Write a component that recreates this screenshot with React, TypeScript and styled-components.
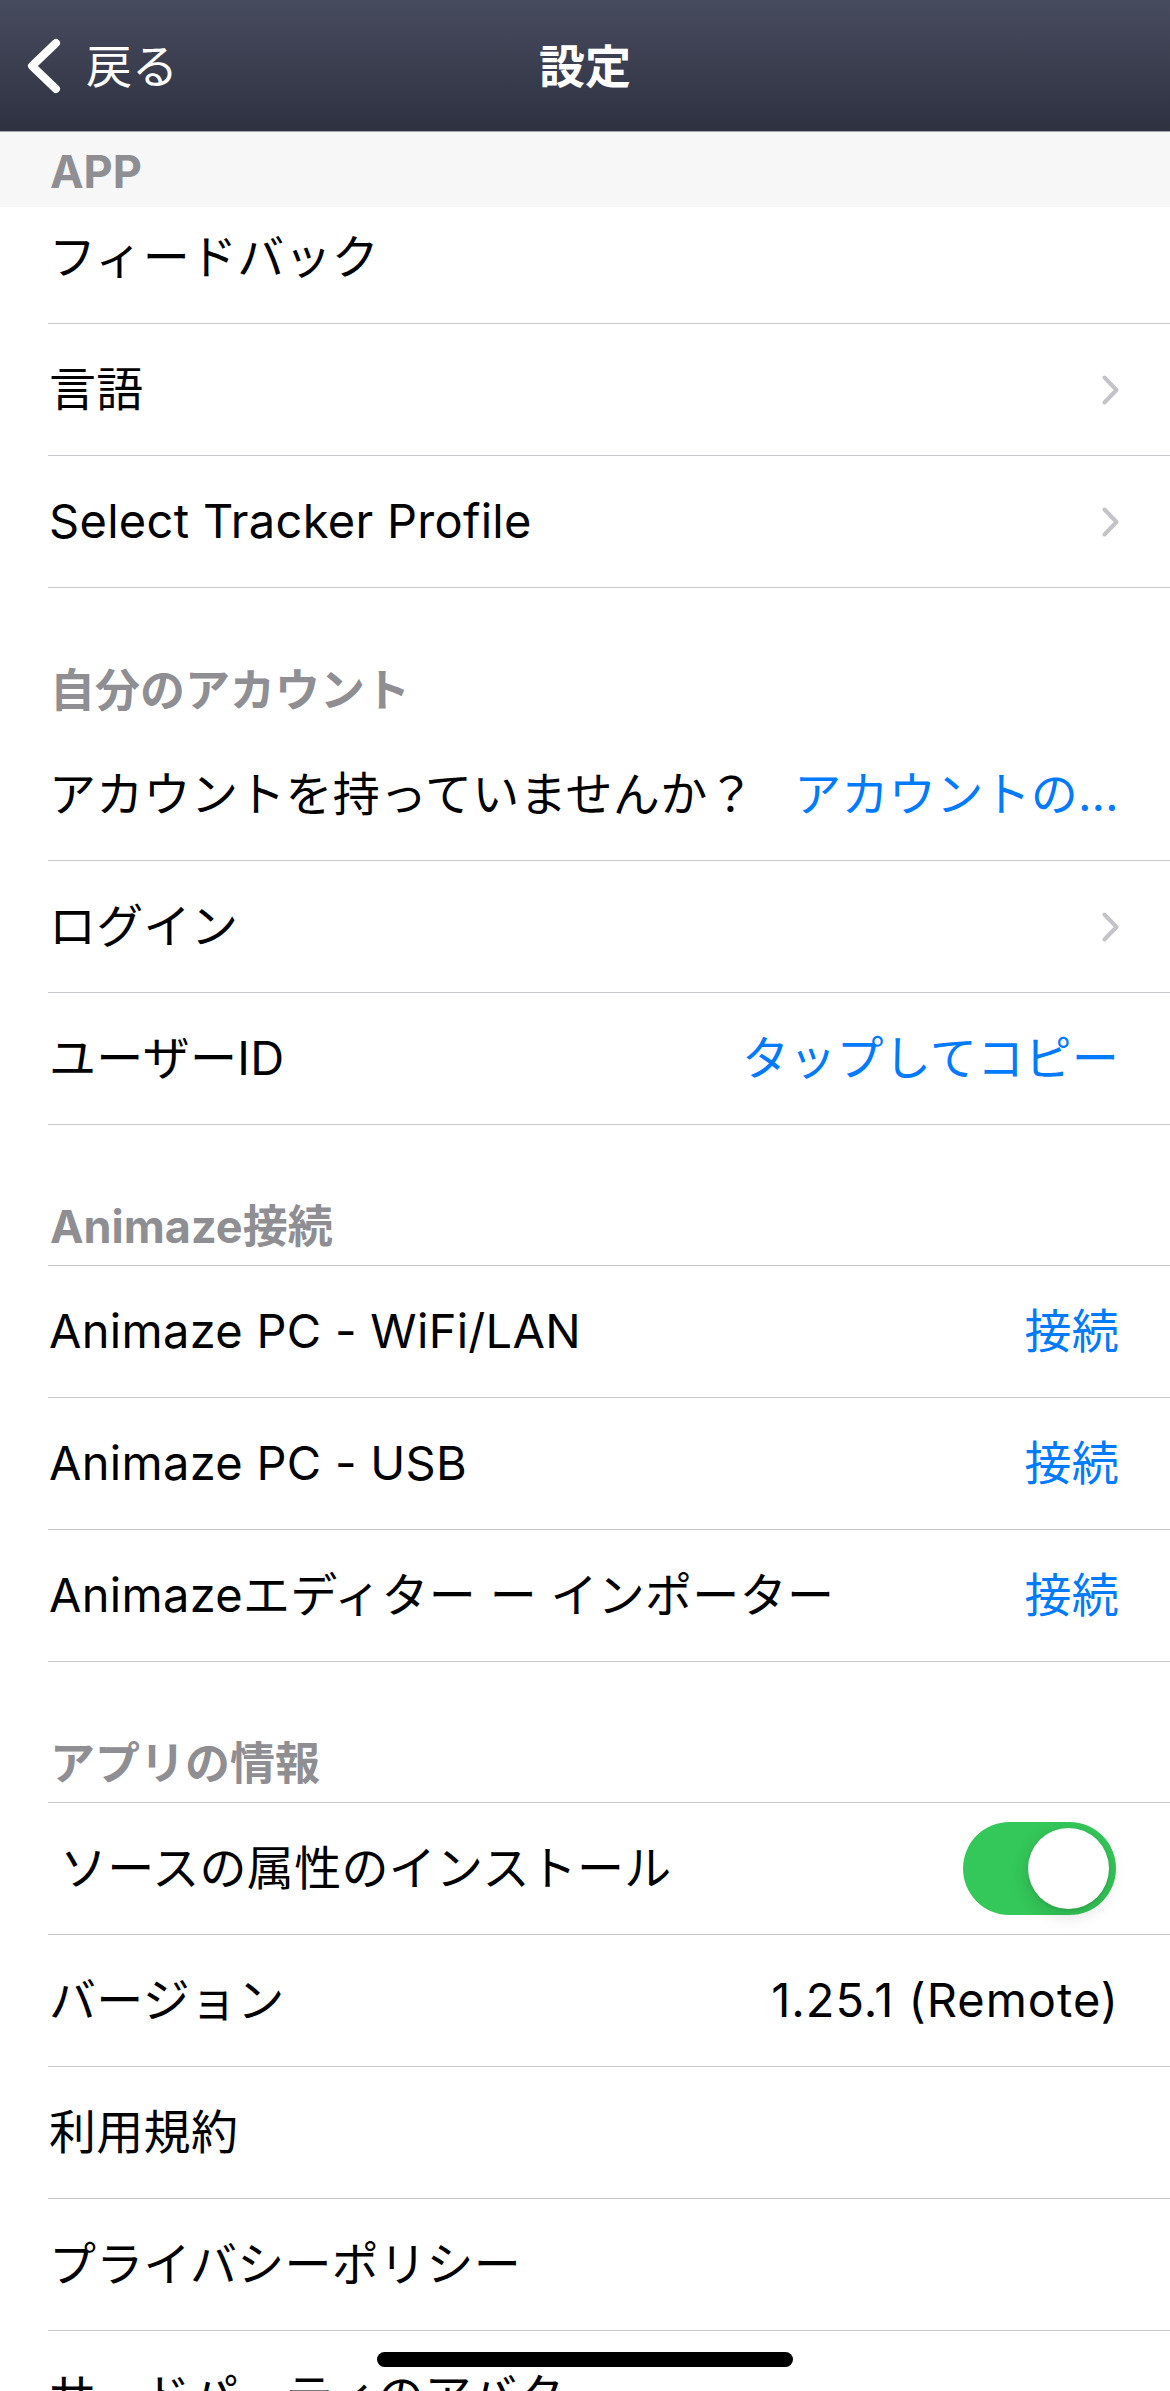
import React from "react";
import styled, { createGlobalStyle } from "styled-components";

const GlobalStyle = createGlobalStyle`
  html, body {
    margin: 0;
    padding: 0;
    background: #ffffff;
  }
  body {
    font-family: Inter, "Noto Sans CJK JP", sans-serif;
    -webkit-font-smoothing: antialiased;
  }
  * { box-sizing: border-box; }
`;

const Screen = styled.div`
  position: relative;
  width: 1170px;
  height: 2391px;
  overflow: hidden;
  background: #ffffff;
  font-family: Inter, "Noto Sans CJK JP", sans-serif;
  color: #000;
`;

const NavBar = styled.header`
  height: 132px;
  border-bottom: 1px solid #a7a8ad;
  background: linear-gradient(180deg, #474b5e 0%, #3a3d4e 55%, #2e3140 100%);
  display: grid;
  grid-template-columns: 1fr auto 1fr;
  align-items: center;
  color: #ffffff;
`;

const BackButton = styled.div`
  display: flex;
  align-items: center;
  gap: 22px;
  padding-left: 24px;
  font-size: 46px;
  font-weight: 400;
  line-height: 1;
`;

const NavTitle = styled.div`
  font-size: 46px;
  font-weight: 700;
  line-height: 1;
`;

const SectionHeader = styled.div<{ $sticky?: boolean; $divider?: boolean }>`
  position: relative;
  z-index: 1;
  display: flex;
  align-items: center;
  height: ${(p) => (p.$sticky ? "75px" : "141px")};
  padding-top: ${(p) => (p.$sticky ? "4px" : "63px")};
  margin-left: ${(p) => (p.$sticky ? "0" : "48px")};
  padding-left: ${(p) => (p.$sticky ? "50px" : "2px")};
  background: ${(p) => (p.$sticky ? "#f7f7f7" : "#ffffff")};
  border-bottom: ${(p) => (p.$divider ? "1px solid #c8c8cc" : "none")};
  color: #8e8e93;
  font-size: 45px;
  font-weight: 700;
  line-height: 1;
`;

const Group = styled.div<{ $under?: boolean }>`
  margin-top: ${(p) => (p.$under ? "-15px" : "0")};
`;

const Row = styled.div`
  padding-left: 48px;
  background: #ffffff;
`;

const RowInner = styled.div`
  height: 132px;
  display: flex;
  align-items: center;
  gap: 24px;
  padding-right: 51px;
  border-bottom: 1px solid #c8c8cc;
`;

const Label = styled.span<{ $indent?: boolean }>`
  font-size: 47px;
  font-weight: 400;
  line-height: 1.2;
  letter-spacing: 0.3px;
  white-space: nowrap;
  padding-left: ${(p) => (p.$indent ? "12px" : "1px")};
  flex-shrink: 0;
`;

const Detail = styled.span<{ $tone?: "link" | "plain" }>`
  margin-left: auto;
  font-size: 47px;
  font-weight: 400;
  line-height: 1.2;
  white-space: nowrap;
  letter-spacing: ${(p) => (p.$tone === "plain" ? "1px" : "0.3px")};
  color: ${(p) => (p.$tone === "link" ? "#007aff" : "#000000")};
`;

const ChevronWrap = styled.span`
  margin-left: auto;
  display: flex;
  align-items: center;
`;

const Toggle = styled.div<{ $on?: boolean }>`
  margin-left: auto;
  margin-right: 3px;
  width: 153px;
  height: 93px;
  border-radius: 47px;
  background: ${(p) => (p.$on ? "#34c759" : "#e9e9eb")};
  display: flex;
  align-items: center;
  justify-content: ${(p) => (p.$on ? "flex-end" : "flex-start")};
  padding: 0 7px;
`;

const Knob = styled.div`
  width: 81px;
  height: 81px;
  border-radius: 50%;
  background: #ffffff;
  box-shadow: 0 6px 18px rgba(0, 0, 0, 0.15), 0 1px 3px rgba(0, 0, 0, 0.1);
`;

const HomeIndicator = styled.div`
  position: absolute;
  left: 50%;
  bottom: 24px;
  transform: translateX(-50%);
  width: 416px;
  height: 15px;
  border-radius: 8px;
  background: #000000;
`;

const BackChevron = () => (
  <svg width="40" height="64" viewBox="0 0 40 64" aria-hidden="true">
    <polyline
      points="32,9 8,32 32,55"
      fill="none"
      stroke="#ffffff"
      strokeWidth="8"
      strokeLinecap="round"
      strokeLinejoin="round"
    />
  </svg>
);

const Chevron = () => (
  <ChevronWrap>
    <svg width="17" height="30" viewBox="0 0 17 30" aria-hidden="true">
      <polyline
        points="2.5,2.5 14.5,15 2.5,27.5"
        fill="none"
        stroke="#c4c4c8"
        strokeWidth="4"
        strokeLinecap="round"
        strokeLinejoin="round"
      />
    </svg>
  </ChevronWrap>
);

type Item = {
  label: string;
  indent?: boolean;
  chevron?: boolean;
  link?: string;
  value?: string;
  toggle?: boolean;
};

const SettingRow = ({ item }: { item: Item }) => (
  <Row>
    <RowInner>
      <Label $indent={item.indent}>{item.label}</Label>
      {item.chevron && <Chevron />}
      {item.link && <Detail $tone="link">{item.link}</Detail>}
      {item.value && <Detail $tone="plain">{item.value}</Detail>}
      {item.toggle && (
        <Toggle $on>
          <Knob />
        </Toggle>
      )}
    </RowInner>
  </Row>
);

const appItems: Item[] = [
  { label: "フィードバック" },
  { label: "言語", chevron: true },
  { label: "Select Tracker Profile", chevron: true },
];

const accountItems: Item[] = [
  { label: "アカウントを持っていませんか？", link: "アカウントの…" },
  { label: "ログイン", chevron: true },
  { label: "ユーザーID", link: "タップしてコピー" },
];

const animazeItems: Item[] = [
  { label: "Animaze PC - WiFi/LAN", link: "接続" },
  { label: "Animaze PC - USB", link: "接続" },
  { label: "Animazeエディター ー インポーター", link: "接続" },
];

const infoItems: Item[] = [
  { label: "ソースの属性のインストール", indent: true, toggle: true },
  { label: "バージョン", value: "1.25.1 (Remote)" },
  { label: "利用規約" },
  { label: "プライバシーポリシー" },
  { label: "サードパーティのアバター" },
];

export default function App() {
  return (
    <>
      <GlobalStyle />
      <Screen>
        <NavBar>
          <BackButton>
            <BackChevron />
            <span>戻る</span>
          </BackButton>
          <NavTitle>設定</NavTitle>
          <div />
        </NavBar>

        <SectionHeader $sticky>APP</SectionHeader>
        <Group $under>
          {appItems.map((it) => (
            <SettingRow key={it.label} item={it} />
          ))}
        </Group>

        <SectionHeader>自分のアカウント</SectionHeader>
        <Group>
          {accountItems.map((it) => (
            <SettingRow key={it.label} item={it} />
          ))}
        </Group>

        <SectionHeader $divider>Animaze接続</SectionHeader>
        <Group>
          {animazeItems.map((it) => (
            <SettingRow key={it.label} item={it} />
          ))}
        </Group>

        <SectionHeader $divider>アプリの情報</SectionHeader>
        <Group>
          {infoItems.map((it) => (
            <SettingRow key={it.label} item={it} />
          ))}
        </Group>

        <HomeIndicator />
      </Screen>
    </>
  );
}
